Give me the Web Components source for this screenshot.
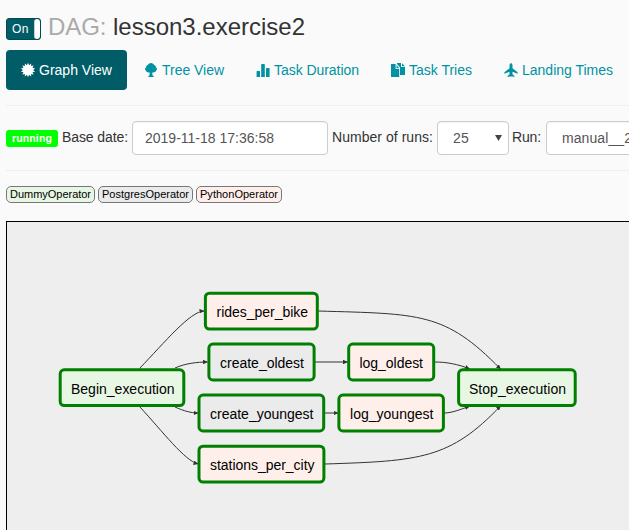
<!DOCTYPE html>
<html lang="en">
<head>
<meta charset="utf-8">
<title>DAG: lesson3.exercise2</title>
<style>
html,body{margin:0;height:100%;overflow:hidden;background:#fafafa;font-family:"Liberation Sans",Arial,sans-serif;font-size:14px;line-height:20px;color:#333}
</style>
</head>
<body>
<dag-page></dag-page>
<script>
const define = (name, html, ready) => customElements.define(name, class extends HTMLElement {
  connectedCallback() {
    if (this.shadowRoot) return;
    const t = document.createElement('template');
    t.innerHTML = html;
    this.attachShadow({mode: 'open'}).appendChild(t.content.cloneNode(true));
    if (ready) ready(this, this.shadowRoot);
  }
});

// Label whose tracking is adjusted so that it takes exactly `w` pixels.
define('fit-text', `<style>:host{display:inline-block;white-space:pre;flex:none}span{display:inline-block}</style><span><slot></slot></span>`, (el, root) => {
  const w = +el.getAttribute('w'), s = root.querySelector('span');
  const n = el.textContent.length;
  s.style.letterSpacing = (w - s.getBoundingClientRect().width) / n + 'px';
  el.style.width = w + 'px';
});

const burst = Array.from({length: 28}, (_, i) => {
  const a = i * Math.PI / 14, r = i % 2 ? 5 : 7.3;
  return (7 + r * Math.sin(a)).toFixed(2) + ',' + (7 - r * Math.cos(a)).toFixed(2);
}).join(' ');
const icons = {
  certificate: `<polygon points="${burst}"/>`,
  tree: `<path d="M7 0C8.6 0 9.8 1 10 2.1C11.4 2.2 12 3.2 11.7 4.3C13.2 4.8 13.4 6.8 12.2 7.6C11.8 9.2 10 9.7 8.4 9.2V12.2L9.6 13V14H4.4V13L5.6 12.2V9.2C4 9.7 2.2 9.2 1.8 7.6C.6 6.8.8 4.8 2.3 4.3C2 3.2 2.6 2.2 4 2.1C4.2 1 5.4 0 7 0Z"/>`,
  stats: `<path d="M.6 8.6Q.6 8 1.2 8H3.4Q4 8 4 8.6V14H.6ZM5.2 1.6Q5.2 1 5.8 1H8.2Q8.8 1 8.8 1.6V14H5.2ZM10 5.6Q10 5 10.6 5H13Q13.6 5 13.6 5.6V14H10Z"/>`,
  duplicate: `<path d="M0 1H4.6V6H8.2V14H0ZM5.5 2L8.2 5.3H5.5ZM6 0H10V4H14V12H9V4.6L6 .9ZM11 .3L14 3.2H11Z"/>`,
  plane: `<path d="M7 0C8 .3 8.5 1.6 8.5 3V5.3L13.6 9.2V10.8L8.5 8.8V11.3L10.4 12.9V14L7.6 13.3L7 14L6.4 13.3L3.6 14V12.9L5.5 11.3V8.8L.4 10.8V9.2L5.5 5.3V3C5.5 1.6 6 .3 7 0Z"/>`
};
define('glyph-icon', `<style>:host{display:block;width:14px;height:14px;margin:-1px 4px 0 0;flex:none}svg{display:block;overflow:visible}</style><svg width="14" height="14" viewBox="0 0 14 14" fill="currentColor"></svg>`,
  (el, root) => root.querySelector('svg').innerHTML = icons[el.getAttribute('name')]);

define('on-toggle', `<style>
:host{display:flex;box-sizing:border-box;width:35px;height:22px;border:1px solid #004b53;border-radius:3px;background:#005c66;color:#fff;font-size:12px;line-height:20px;overflow:hidden;margin-top:18px;flex:none}
.t{flex:1;padding-left:5px}.k{width:5px;background:#fff;border-left:1px solid #ccc;border-radius:3px}
</style><span class="t"><fit-text w="17">On</fit-text></span><span class="k"></span>`);

define('nav-tab', `<style>
:host{display:flex;align-items:center;height:40px;padding:0 15px;box-sizing:border-box;border-radius:4px;color:#0092a2;margin-right:2px;flex:none}
:host([active]){background:#005c66;color:#fff}
</style><slot></slot>`);

define('form-box', `<style>
:host{display:flex;align-items:center;box-sizing:border-box;height:34px;border:1px solid #ccc;border-radius:4px;background:#fff;color:#555;padding:0 12px;box-shadow:inset 0 1px 1px rgba(0,0,0,.05);flex:none;white-space:nowrap}
svg{display:none;margin-left:auto;margin-right:-6px;flex:none}
:host([select]){padding-left:15px}:host([select]) svg{display:block}
</style><slot></slot><svg width="7" height="6"><path d="M0 0H7L3.5 6Z" fill="#444"/></svg>`);

define('run-badge', `<style>:host{display:block;box-sizing:border-box;width:52px;height:17px;border-radius:3px;background:#0f0;color:#fff;font-weight:700;font-size:10.5px;line-height:17px;padding-left:6px;flex:none}</style><slot></slot>`);

define('operator-chip', `<style>:host{display:block;box-sizing:border-box;height:17px;border:1px solid #777;border-radius:5px;font-size:11px;line-height:14px;padding:0 3px;color:#000;margin-right:3px;flex:none}</style><slot></slot>`);

define('dag-graph', `<style>
:host{display:block;box-sizing:border-box;border:1px solid #000;border-right:0;border-bottom:0;background:#eee;overflow:hidden}
svg{display:block}
rect{stroke:#008000;stroke-width:3px}
text{font-family:"Liberation Sans",Arial,sans-serif;font-size:14px;fill:#000}
.e path{fill:none;stroke:#333;stroke-width:1px}
</style><svg width="622" height="308" viewBox="7 222 622 308"></svg>`, (el, root) => {
  const G = '#e8f7e4', P = '#ebebeb', R = '#ffefeb';
  const nodes = [
    ['Begin_execution', 60.2, 369.8, 123.6, G, 71, 103.5],
    ['rides_per_bike', 205.4, 293.2, 111.9, R, 216.5, 91.5],
    ['create_oldest', 208.9, 344.1, 105.2, P, 220, 84],
    ['create_youngest', 199, 395.1, 124.7, P, 210, 103.5],
    ['stations_per_city', 199, 446.2, 124.9, R, 210, 104.5],
    ['log_oldest', 348.7, 344.1, 85, R, 359.5, 63.5],
    ['log_youngest', 338.9, 395.1, 104.5, R, 350, 83.5],
    ['Stop_execution', 458.6, 369.8, 116.6, G, 469, 97]
  ];
  const edges = [
    'M139.5 368.5C165 342 190 311.5 204 311',
    'M175 368C185 363.5 197 362 207.5 362',
    'M175 407C184 411 191 413 198 413',
    'M139.5 406.5C163 432 185 461 198 463.8',
    'M318 311C420 314 445 312 500.5 369',
    'M315 362H347.5',
    'M325 413H338',
    'M434.5 362C447 362 458 364.3 469.5 368.8',
    'M444 413C452 413 460 409.5 469.5 406.3',
    'M325 464C420 461 450 459 500.5 406'
  ];
  root.querySelector('svg').innerHTML =
    `<defs><marker id="a" viewBox="0 0 10 10" refX="9" refY="5" markerWidth="5" markerHeight="4.5" markerUnits="userSpaceOnUse" preserveAspectRatio="none" orient="auto"><path d="M0 0L10 5L0 10Z" style="fill:#333;stroke:none"/></marker></defs><g class="e">` +
    edges.map(d => `<path d="${d}" marker-end="url(#a)"/>`).join('') + '</g>' +
    nodes.map(([t, x, y, w, c, tx, tw]) => `<rect x="${x}" y="${y}" width="${w}" height="35.8" rx="4" fill="${c}"/><text x="${tx}" y="${y + 24}" textLength="${tw}">${t}</text>`).join('');
});

define('dag-page', `<style>
:host{display:flex;flex-direction:column;height:530px;padding-left:6px;box-sizing:border-box;overflow:hidden}
header{display:flex;height:50px}
h3{margin:9px 0 0 7px;font-weight:400;font-size:24px;line-height:36px;display:flex}
h3 fit-text:first-child{color:#aaa}
nav{display:flex;height:40px}
.rule{height:1px;background:#eee;flex:none}
.form{display:flex;align-items:center;height:34px;margin:15px 0}
.form>fit-text{position:relative;top:-1px}
.ops{display:flex;margin:15px 0 18px}
dag-graph{flex:1}
</style>
<header><on-toggle></on-toggle><h3><fit-text w="65">DAG: </fit-text><fit-text w="192">lesson3.exercise2</fit-text></h3></header>
<nav>
<nav-tab active><glyph-icon name="certificate"></glyph-icon><fit-text w="73">Graph View</fit-text></nav-tab>
<nav-tab><glyph-icon name="tree"></glyph-icon><fit-text w="62">Tree View</fit-text></nav-tab>
<nav-tab><glyph-icon name="stats"></glyph-icon><fit-text w="85">Task Duration</fit-text></nav-tab>
<nav-tab><glyph-icon name="duplicate"></glyph-icon><fit-text w="63">Task Tries</fit-text></nav-tab>
<nav-tab><glyph-icon name="plane"></glyph-icon><fit-text w="91">Landing Times</fit-text></nav-tab>
</nav>
<div class="rule" style="margin-top:15px"></div>
<div class="form">
<run-badge><fit-text w="40">running</fit-text></run-badge>
<fit-text w="66" style="margin:0 4px">Base date:</fit-text>
<form-box style="width:196px"><fit-text w="129">2019-11-18 17:36:58</fit-text></form-box>
<fit-text w="101" style="margin:0 4px">Number of runs:</fit-text>
<form-box select style="width:72px"><fit-text w="16">25</fit-text></form-box>
<fit-text w="29" style="margin:0 4px 0 3px">Run:</fit-text>
<form-box select style="width:200px;margin-left:1px"><fit-text w="70">manual__2</fit-text></form-box>
</div>
<div class="rule"></div>
<div class="ops">
<operator-chip style="background:#e8f7e4"><fit-text w="81">DummyOperator</fit-text></operator-chip>
<operator-chip style="background:#ebebeb"><fit-text w="87">PostgresOperator</fit-text></operator-chip>
<operator-chip style="background:#ffefeb"><fit-text w="78">PythonOperator</fit-text></operator-chip>
</div>
<dag-graph></dag-graph>`);
</script>
</body>
</html>
